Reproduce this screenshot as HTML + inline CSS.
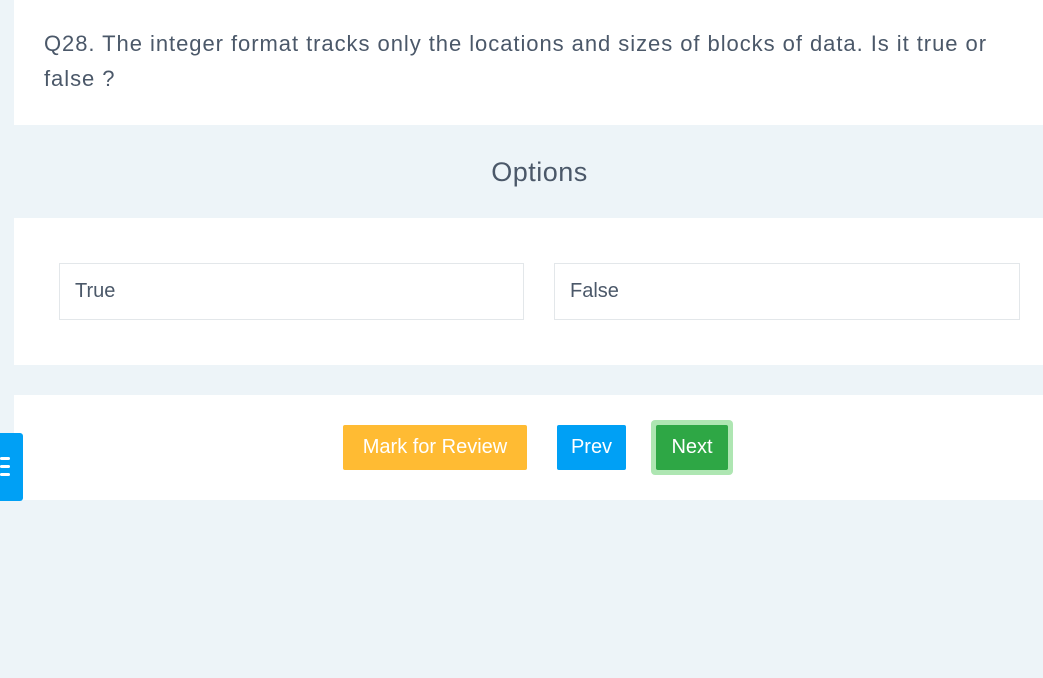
<!DOCTYPE html>
<html><head><style>
body{margin:0;width:1043px;height:678px;background:#edf4f8;font-family:"Liberation Sans",sans-serif;color:#4b5869;position:relative;overflow:hidden}
.p{position:absolute;left:14px;right:0;background:#fff}
.q{top:0;height:125px}
.q div{position:absolute;left:30px;top:26px;width:1000px;font-size:22px;line-height:35px;letter-spacing:0.95px;white-space:nowrap}
.opt{position:absolute;top:263px;height:55px;border:1px solid #e3e7ea;background:#fff;font-size:20px;line-height:55px;box-sizing:border-box;padding-left:15px}
.b{position:absolute;top:425px;height:45px;line-height:45px;color:#fff;font-size:20px;text-align:center;border-radius:2px}
</style></head><body>
<div class="p q"><div>Q28. The integer format tracks only the locations and sizes of blocks of data. Is it true or<br>false ?</div></div>
<div style="position:absolute;top:155px;left:36px;right:0;text-align:center;font-size:27px;line-height:34px;letter-spacing:0.5px">Options</div>
<div class="p" style="top:218px;height:147px"></div>
<div class="opt" style="left:59px;width:465px;height:57px">True</div>
<div class="opt" style="left:554px;width:466px;height:57px">False</div>
<div class="p" style="top:395px;height:105px"></div>
<div class="b" style="left:343px;width:184px;background:#ffbb33">Mark for Review</div>
<div class="b" style="left:557px;width:69px;background:#00a0f5">Prev</div>
<div class="b" style="left:651px;top:420px;width:82px;height:55px;background:#aee6b2;border-radius:4px"></div>
<div class="b" style="left:656px;width:72px;background:#2ea745">Next</div>
<div style="position:absolute;left:0;top:433px;width:23px;height:68px;background:#00a0f5;border-radius:0 3px 3px 0">
<div style="position:absolute;left:0;top:24px;width:10px;height:3px;background:#fff;border-radius:2px"></div>
<div style="position:absolute;left:0;top:32px;width:10px;height:3px;background:#fff;border-radius:2px"></div>
<div style="position:absolute;left:0;top:40px;width:10px;height:3px;background:#fff;border-radius:2px"></div>
</div>
</body></html>
